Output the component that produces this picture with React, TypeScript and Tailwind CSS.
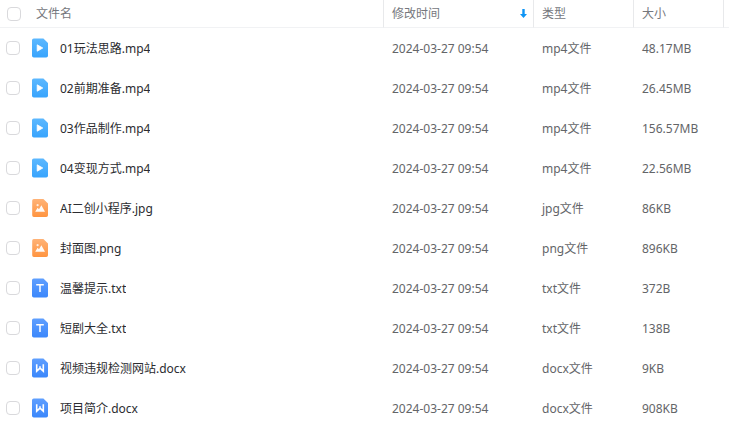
import type { ReactNode } from "react";

type FileKind = "mp4" | "jpg" | "png" | "txt" | "docx";

type FileRow = {
    name: string;
    modified: string;
    kind: FileKind;
    size: string;
};

const FILES: FileRow[] = [
    { name: "01玩法思路.mp4", modified: "2024-03-27 09:54", kind: "mp4", size: "48.17MB" },
    { name: "02前期准备.mp4", modified: "2024-03-27 09:54", kind: "mp4", size: "26.45MB" },
    { name: "03作品制作.mp4", modified: "2024-03-27 09:54", kind: "mp4", size: "156.57MB" },
    { name: "04变现方式.mp4", modified: "2024-03-27 09:54", kind: "mp4", size: "22.56MB" },
    { name: "AI二创小程序.jpg", modified: "2024-03-27 09:54", kind: "jpg", size: "86KB" },
    { name: "封面图.png", modified: "2024-03-27 09:54", kind: "png", size: "896KB" },
    { name: "温馨提示.txt", modified: "2024-03-27 09:54", kind: "txt", size: "372B" },
    { name: "短剧大全.txt", modified: "2024-03-27 09:54", kind: "txt", size: "138B" },
    { name: "视频违规检测网站.docx", modified: "2024-03-27 09:54", kind: "docx", size: "9KB" },
    { name: "项目简介.docx", modified: "2024-03-27 09:54", kind: "docx", size: "908KB" },
];

const SHEET = "M1.8 .4H11.4L16 5V17.8A1.8 1.8 0 0 1 14.2 19.6H1.8A1.8 1.8 0 0 1 0 17.8V2.2A1.8 1.8 0 0 1 1.8 .4Z";
// Picture files use a slightly shorter sheet
const SHORT_SHEET = "M1.8 1H11.4L16 5.4V17.2A1.8 1.8 0 0 1 14.2 19H1.8A1.8 1.8 0 0 1 .2 17.2V2.8A1.8 1.8 0 0 1 1.8 1Z";

// Sheet with a clipped top right corner, shared by every file icon
function Sheet({ id, from, to, shape = SHEET, children }: { id: string; from: string; to: string; shape?: string; children: ReactNode }) {
    return (
        <svg width="16" height="20" viewBox="0 0 16 20" fill="none" className="shrink-0" aria-hidden="true">
            <defs>
                <linearGradient id={id} x1="0" y1="0" x2="0" y2="1">
                    <stop offset="0" stopColor={from} />
                    <stop offset="1" stopColor={to} />
                </linearGradient>
            </defs>
            <path d={shape} fill={`url(#${id})`} />
            {children}
        </svg>
    );
}

function FileIcon({ kind, id }: { kind: FileKind; id: string }) {
    if (kind === "mp4") {
        return (
            <Sheet id={id} from="#5cb8ff" to="#38a4fd">
                <path d="M5.2 6.8V13.2L10.8 10Z" fill="#fff" stroke="#fff" strokeWidth=".8" strokeLinejoin="round" />
            </Sheet>
        );
    }
    if (kind === "jpg" || kind === "png") {
        return (
            <Sheet id={id} from="#ffb377" to="#ff9440" shape={SHORT_SHEET}>
                <circle cx="5.6" cy="7.2" r="1.1" fill="#fff" fillOpacity=".8" />
                <path d="M3.2 13.8L5.6 9.8L7 11.2L9.4 7.2L13 13.8Z" fill="#fff" fillOpacity=".95" />
            </Sheet>
        );
    }
    if (kind === "txt") {
        return (
            <Sheet id={id} from="#5f9fff" to="#3b87fb">
                <path d="M4.2 6.8H11.8M8 6.8V14" stroke="#fff" strokeWidth="1.5" />
            </Sheet>
        );
    }
    return (
        <Sheet id={id} from="#5f9fff" to="#3b87fb">
            <path d="M4.7 6.2V13.2L8 10.2L11.3 13.2V6.2" stroke="#fff" strokeWidth="1.6" />
            <path d="M8 8V10.6" stroke="#fff" strokeWidth="1.2" />
        </Sheet>
    );
}

function Checkbox({ label }: { label: string }) {
    return (
        <input
            type="checkbox"
            aria-label={label}
            className="size-3.5 shrink-0 appearance-none rounded-[4px] border border-[#d9d9dc] bg-white checked:border-[#06a7ff] checked:bg-[#06a7ff]"
        />
    );
}

export default function App() {
    return (
        <main className="min-h-screen bg-white font-['Noto_Sans','Noto_Sans_CJK_SC',sans-serif] text-xs text-[#636568]">
            <table className="w-full table-fixed border-separate border-spacing-0 text-left">
                <colgroup>
                    <col />
                    <col className="w-[150px]" />
                    <col className="w-[100px]" />
                    <col className="w-[90px]" />
                    <col className="w-[6px]" />
                </colgroup>
                <thead className="text-[#75777d]">
                    <tr className="h-7">
                        <th scope="col" className="border-b border-[#f1f2f4] p-0 pl-[7px] font-normal">
                            <div className="flex items-center gap-[15px]">
                                <Checkbox label="全选" />
                                <span>文件名</span>
                            </div>
                        </th>
                        <th scope="col" aria-sort="descending" className="border-b border-l border-[#f1f2f4] border-l-[#e8e9eb] p-0 pl-2 font-normal">
                            <button type="button" className="flex w-full items-center justify-between pr-1.5">
                                修改时间
                                <svg width="7" height="9" viewBox="0 0 7 9" fill="#0d94f5" aria-hidden="true">
                                    <path d="M2.3 0H4.7V5H7L3.5 9L0 5H2.3Z" />
                                </svg>
                            </button>
                        </th>
                        <th scope="col" className="border-b border-l border-[#f1f2f4] border-l-[#e8e9eb] p-0 pl-2 font-normal">类型</th>
                        <th scope="col" className="border-b border-l border-[#f1f2f4] border-l-[#e8e9eb] p-0 pl-2 font-normal">大小</th>
                        <td className="border-b border-l border-[#f1f2f4] border-l-[#e8e9eb] p-0" />
                    </tr>
                </thead>
                <tbody>
                    {FILES.map((file, i) => (
                        <tr key={file.name} className="h-10">
                            <td className="p-0 pl-1.5 text-[#2b2c30]">
                                <div className="flex items-center gap-3">
                                    <Checkbox label={file.name} />
                                    <FileIcon kind={file.kind} id={`sheet-${i}`} />
                                    <span className="truncate pt-0.5">{file.name}</span>
                                </div>
                            </td>
                            <td className="p-0 pt-0.5 pl-2 pr-2 border-l border-transparent">{file.modified}</td>
                            <td className="p-0 pt-0.5 pl-2 border-l border-transparent">{file.kind}文件</td>
                            <td className="p-0 pt-0.5 pl-2 border-l border-transparent">{file.size}</td>
                            <td className="p-0" />
                        </tr>
                    ))}
                </tbody>
            </table>
        </main>
    );
}
